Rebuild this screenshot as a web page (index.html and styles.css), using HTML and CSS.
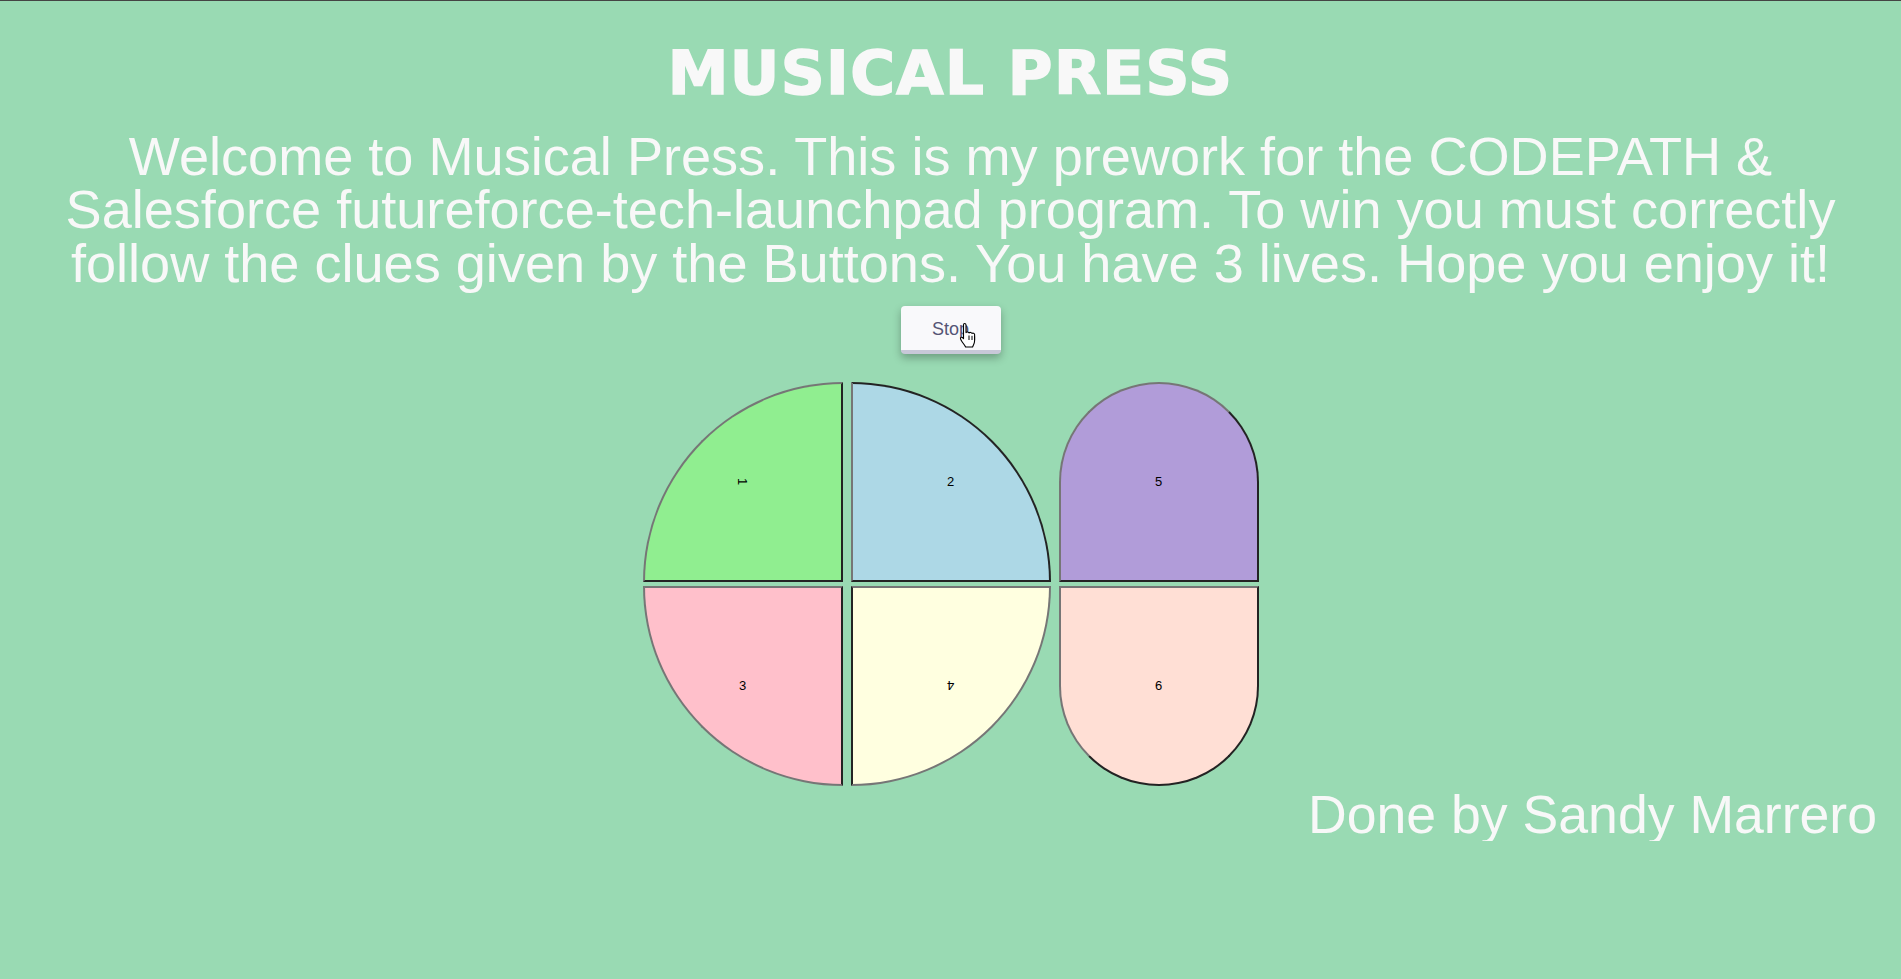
FILE: index.html
```html
<!DOCTYPE html>
<html lang="en">
<head>
<meta charset="utf-8">
<title>Musical Press</title>
<link rel="stylesheet" href="styles.css">
</head>
<body>
  <h1 class="title">MUSICAL PRESS</h1>
  <p class="intro">Welcome to Musical Press. This is my prework for the CODEPATH &amp; Salesforce futureforce-tech-launchpad program. To win you must correctly follow the clues given by the Buttons. You have 3 lives. Hope you enjoy it!</p>
  <div class="controls">
    <button class="stop-btn">Stop</button>
  </div>
  <div class="board">
    <button class="pad pad1"><span class="num rot90">1</span></button>
    <button class="pad pad2"><span class="num">2</span></button>
    <button class="pad pad5"><span class="num">5</span></button>
    <button class="pad pad3"><span class="num">3</span></button>
    <button class="pad pad4"><span class="num rot180">4</span></button>
    <button class="pad pad6"><span class="num">6</span></button>
  </div>
  <p class="credit">Done by Sandy Marrero</p>
  <svg class="cursor" width="20" height="27" viewBox="0 0 20 27">
    <path d="M6.5 1.5c.9 0 1.5.6 1.5 1.5v7.6c.4-.9 2.7-.9 3 .4.5-.9 2.7-.8 3 .5.6-.7 2.6-.5 2.6 1v6.2c0 2.8-1.4 4.4-2 6.3H7.6c-.6-1.6-2.5-3.6-4-6-1-1.6-1.6-3-.6-3.6 1-.6 2 .4 2.5 1.4V3c0-.9.4-1.5 1-1.5z" fill="#fff" stroke="#000" stroke-width="1.1" stroke-linejoin="round"/>
    <path d="M11 13.5v4.5M14 13.8v4.2M16.6 14.3v3.7" stroke="#000" stroke-width="1"/>
  </svg>
</body>
</html>
```
FILE: styles.css
```css
html {
  border-top: 1px solid #444;
  background: #99dab3;
}

body {
  margin: 8px;
  font-family: "Liberation Sans", Arial, sans-serif;
  color: #f8f8f8;
  position: relative;
}

.title {
  margin: 28px 0 0;
  font-family: "DejaVu Sans", "Liberation Sans", sans-serif;
  font-weight: 700;
  font-size: 61px;
  line-height: 71px;
  letter-spacing: 1.4px;
  -webkit-text-stroke: 1.6px #f8f8f8;
  text-align: center;
}

.intro {
  margin: 22px 0 0;
  font-size: 54.1px;
  line-height: 53.3px;
  text-align: center;
}

.controls {
  display: flex;
  justify-content: center;
  margin-top: 16px;
}

.stop-btn {
  width: 100px;
  height: 48px;
  box-sizing: border-box;
  border: none;
  border-bottom: 4px solid #c8c8d8;
  border-radius: 4px;
  background: #f9f9fb;
  color: #555575;
  font-family: "Liberation Sans", Arial, sans-serif;
  font-size: 18px;
  box-shadow: 0 4px 8px rgba(0, 0, 0, 0.28);
  padding: 3px 0 0;
}

.board {
  display: grid;
  grid-template-columns: repeat(3, 200px);
  column-gap: 8px;
  row-gap: 4px;
  justify-content: center;
  margin-top: 28px;
}

.pad {
  width: 200px;
  height: 200px;
  box-sizing: border-box;
  border: 2px solid;
  border-color: #767676 #232323 #232323 #767676;
  padding: 0;
  display: flex;
  align-items: center;
  justify-content: center;
  font-family: "Liberation Sans", Arial, sans-serif;
  font-size: 13px;
  color: #000;
}

.num { display: inline-block; }
.rot90 { transform: rotate(90deg); }
.rot180 { transform: rotate(180deg); }

.pad1 {
  background: #90ee90;
  border-top-left-radius: 100%;
}

.pad2 {
  background: #add8e6;
  border-top-right-radius: 100%;
  border-color: #232323 #232323 #232323 #767676;
}

.pad3 {
  background: #ffc0cb;
  border-bottom-left-radius: 100%;
  border-color: #767676 #232323 #767676 #767676;
}

.pad4 {
  background: #ffffe0;
  border-bottom-right-radius: 100%;
  border-color: #767676 #767676 #767676 #232323;
}

.pad5 {
  background: #b19cd9;
  border-radius: 100px 100px 0 0;
}

.pad6 {
  background: #ffdfd5;
  border-radius: 0 0 100px 100px;
}

.credit {
  margin: 2px 0 0;
  padding-right: 16px;
  font-size: 53.6px;
  line-height: 53.3px;
  text-align: right;
}

.cursor {
  position: absolute;
  left: 950px;
  top: 313px;
}
```
